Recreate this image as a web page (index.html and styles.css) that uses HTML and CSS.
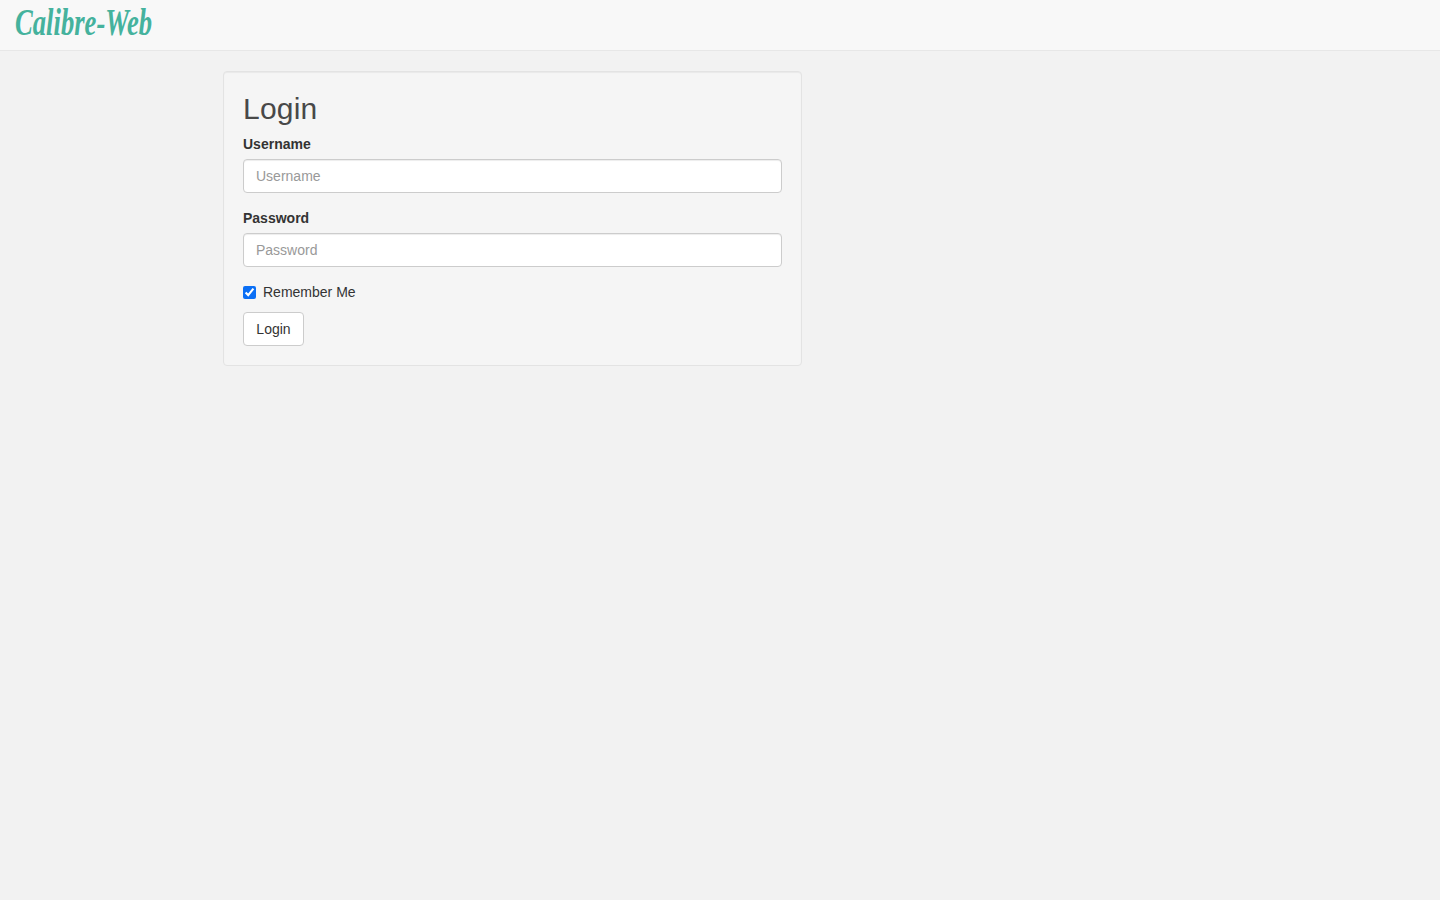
FILE: index.html
```html
<!DOCTYPE html>
<html lang="en">
<head>
<meta charset="utf-8">
<title>Calibre-Web | Login</title>
<link rel="stylesheet" href="styles.css">
</head>
<body>
<nav class="navbar">
  <a class="brand" href="#">Calibre-Web</a>
</nav>
<main class="main">
  <div class="well">
    <h2 class="title">Login</h2>
    <form class="form">
      <div class="group">
        <label class="label" for="username">Username</label>
        <input class="input" id="username" type="text" placeholder="Username">
      </div>
      <div class="group">
        <label class="label" for="password">Password</label>
        <input class="input" id="password" type="password" placeholder="Password">
      </div>
      <label class="check">
        <input class="checkbox" type="checkbox" checked>
        <span>Remember Me</span>
      </label>
      <button class="btn" type="button">Login</button>
    </form>
  </div>
</main>
</body>
</html>
```
FILE: styles.css
```css
* { box-sizing: border-box; }
html, body { margin: 0; height: 100%; }
body {
  background: #f2f2f2;
  color: #333;
  font-family: "Liberation Sans", Arial, sans-serif;
  font-size: 14px;
  line-height: 20px;
}
.navbar {
  height: 51px;
  background: #f8f8f8;
  border-bottom: 1px solid #e7e7e7;
  padding-left: 15px;
  display: flex;
  align-items: flex-start;
}
.brand {
  display: inline-block;
  color: #45b29d;
  font-family: "Liberation Serif", serif;
  font-style: italic;
  font-weight: 700;
  font-size: 37px;
  line-height: 46px;
  text-decoration: none;
  transform: scaleX(.72);
  transform-origin: left center;
}
.main { padding: 20px 0 0 223px; }
.well {
  width: 579px;
  padding: 19px;
  background: #f5f5f5;
  border: 1px solid #e3e3e3;
  border-radius: 4px;
  box-shadow: inset 0 1px 1px rgba(0, 0, 0, .05);
}
.title {
  margin: 0 0 8px;
  color: #484848;
  font-size: 30px;
  font-weight: 400;
  line-height: 35px;
  letter-spacing: .2px;
}
.form { display: flex; flex-direction: column; }
.group { margin-bottom: 15px; }
.label {
  display: block;
  margin-bottom: 5px;
  font-weight: 700;
}
.input {
  display: block;
  width: 100%;
  height: 34px;
  padding: 6px 12px;
  background: #fff;
  border: 1px solid #ccc;
  border-radius: 4px;
  box-shadow: inset 0 1px 1px rgba(0, 0, 0, .075);
  color: #555;
  font: inherit;
}
.input::placeholder { color: #999; opacity: 1; }
.check {
  display: flex;
  align-items: center;
  gap: 7px;
  height: 20px;
  margin-bottom: 10px;
}
.checkbox {
  width: 13px;
  height: 13px;
  margin: 0;
  accent-color: #0b6ff5;
}
.btn {
  align-self: flex-start;
  width: 61px;
  height: 34px;
  padding: 6px 12px;
  background: #fff;
  border: 1px solid #ccc;
  border-radius: 4px;
  color: #333;
  font: inherit;
}
```
